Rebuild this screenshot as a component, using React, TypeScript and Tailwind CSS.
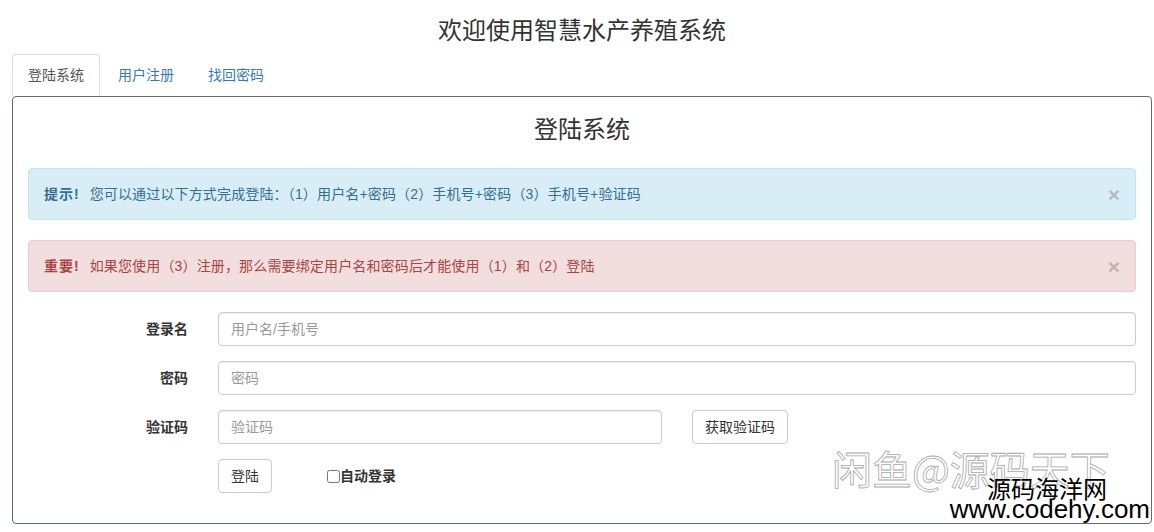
import React from 'react';

const tabs = [
  { label: '登陆系统', active: true },
  { label: '用户注册', active: false },
  { label: '找回密码', active: false },
];

const Alert: React.FC<{ tone: 'info' | 'danger'; title: string; text: string }> = ({ tone, title, text }) => {
  const cls =
    tone === 'info'
      ? 'bg-[#d9edf7] border-[#bce8f1] text-[#31708f]'
      : 'bg-[#f2dede] border-[#ebccd1] text-[#a94442]';
  return (
    <div className={`flex items-center h-[52px] border rounded-[4px] pl-[15px] pr-[15px] mb-[20px] ${cls}`}>
      <p className="flex-1 text-[14px] leading-[20px]">
        <strong className="font-bold tracking-[1px]">{title}</strong>
        <span className="ml-[10px] tracking-[0.15px]">{text}</span>
      </p>
      <span className="text-[21px] leading-none font-bold text-black opacity-20">×</span>
    </div>
  );
};

const Field: React.FC<{ label: string; placeholder: string; children?: React.ReactNode; full?: boolean }> = ({
  label,
  placeholder,
  children,
  full = true,
}) => (
  <div className="flex items-center mb-[15px]">
    <label className="w-[160px] text-right font-bold text-[14px] text-[#333] leading-[20px]">{label}</label>
    <div className="ml-[30px] flex-1 flex items-center">
      <input
        type="text"
        placeholder={placeholder}
        className={`h-[34px] border border-[#ccc] rounded-[4px] px-[12px] text-[14px] text-[#555] placeholder:text-[#999] shadow-[inset_0_1px_1px_rgba(0,0,0,0.075)] outline-none ${
          full ? 'flex-1' : 'w-[444px]'
        }`}
      />
      {children}
    </div>
  </div>
);

export default function App() {
  return (
    <div className="relative w-[1154px] h-[532px] overflow-hidden bg-white text-[#333] font-['Liberation_Sans','Noto_Sans_CJK_SC',sans-serif]">
      <div className="h-[54px] flex items-center justify-center pt-[8px] pl-[10px]">
        <h1 className="text-[24px] leading-[26px] font-normal text-[#333]">欢迎使用智慧水产养殖系统</h1>
      </div>

      {/* Tabs */}
      <div className="flex ml-[12px] h-[42px]">
        {tabs.map((t) => (
          <div
            key={t.label}
            className={`h-[42px] px-[15px] mr-[2px] flex items-center text-[14px] rounded-t-[4px] border border-b-0 ${
              t.active ? 'border-[#ddd] bg-white text-[#555]' : 'border-transparent text-[#337ab7]'
            }`}
          >
            {t.label}
          </div>
        ))}
      </div>

      {/* Panel */}
      <div className="ml-[12px] w-[1140px] h-[428px] border border-[#5d6b78] rounded-[4px] px-[15px]">
        <h2 className="pt-[20px] mb-[25px] text-center text-[24px] leading-[26px] font-normal text-[#333]">登陆系统</h2>

        <Alert
          tone="info"
          title="提示!"
          text="您可以通过以下方式完成登陆：（1）用户名+密码（2）手机号+密码（3）手机号+验证码"
        />
        <Alert
          tone="danger"
          title="重要!"
          text="如果您使用（3）注册，那么需要绑定用户名和密码后才能使用（1）和（2）登陆"
        />

        <Field label="登录名" placeholder="用户名/手机号" />
        <Field label="密码" placeholder="密码" />
        <Field label="验证码" placeholder="验证码" full={false}>
          <button className="ml-[30px] h-[34px] px-[12px] border border-[#ccc] rounded-[4px] bg-white text-[14px] text-[#333]">
            获取验证码
          </button>
        </Field>

        <div className="flex items-center">
          <div className="w-[160px]" />
          <div className="ml-[30px] flex items-center">
            <button className="h-[34px] px-[12px] border border-[#ccc] rounded-[4px] bg-white text-[14px] text-[#333]">
              登陆
            </button>
            <label className="ml-[55px] flex items-center text-[14px] font-bold text-[#333]">
              <input type="checkbox" className="w-[13px] h-[13px] m-0" />
              自动登录
            </label>
          </div>
        </div>
      </div>

      {/* watermarks */}
      <div className="absolute left-[832px] top-[444px] text-[40px] leading-[48px] text-white [-webkit-text-stroke:0.8px_#a8a8a8] font-['Noto_Sans_CJK_SC',sans-serif] whitespace-nowrap">
        闲鱼@源码天下
      </div>
      <div className="absolute right-[47px] top-[473px] text-[24px] leading-[30px] text-black font-['Noto_Sans_CJK_SC',sans-serif] whitespace-nowrap">
        源码海洋网
      </div>
      <div className="absolute right-[4px] top-[495px] text-[26px] leading-[28px] text-black font-['Liberation_Sans',sans-serif] whitespace-nowrap">
        www.codehy.com
      </div>
    </div>
  );
}
